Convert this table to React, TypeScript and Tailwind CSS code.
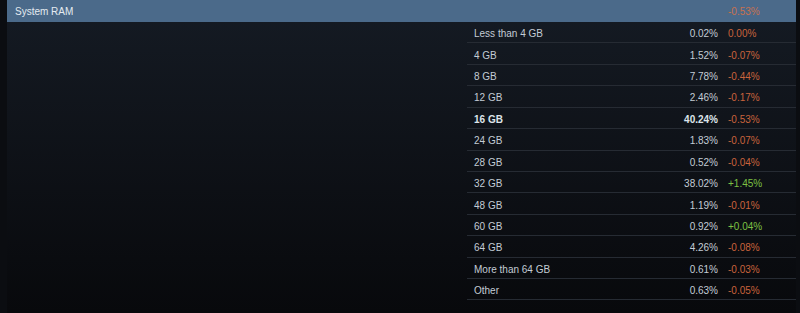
import React from 'react';

type Row = { label: string; pct: string; change: string; bold?: boolean };

const ROWS: Row[] = [
  { label: 'Less than 4 GB', pct: '0.02%', change: '0.00%' },
  { label: '4 GB', pct: '1.52%', change: '-0.07%' },
  { label: '8 GB', pct: '7.78%', change: '-0.44%' },
  { label: '12 GB', pct: '2.46%', change: '-0.17%' },
  { label: '16 GB', pct: '40.24%', change: '-0.53%', bold: true },
  { label: '24 GB', pct: '1.83%', change: '-0.07%' },
  { label: '28 GB', pct: '0.52%', change: '-0.04%' },
  { label: '32 GB', pct: '38.02%', change: '+1.45%' },
  { label: '48 GB', pct: '1.19%', change: '-0.01%' },
  { label: '60 GB', pct: '0.92%', change: '+0.04%' },
  { label: '64 GB', pct: '4.26%', change: '-0.08%' },
  { label: 'More than 64 GB', pct: '0.61%', change: '-0.03%' },
  { label: 'Other', pct: '0.63%', change: '-0.05%' },
];

function changeColor(change: string) {
  return change.startsWith('+') ? 'text-[#7cc043]' : 'text-[#c9633c]';
}

export default function App() {
  return (
    <div className="w-[800px] h-[313px] bg-[#0b0d11] flex pl-[7px] pr-[4px] font-['Liberation_Sans',Arial,sans-serif] text-[10px] overflow-hidden">
      <div className="flex-1 flex flex-col bg-gradient-to-b from-[#151b24] to-[#08090c]">
        {/* header bar */}
        <div className="h-[22px] shrink-0 bg-[#4b6a8a] flex items-center pt-[1px]">
          <span className="flex-1 pl-[8px] text-[#e4eaf0]">System RAM</span>
          <span className="w-[68px] text-[#c8714f]">-0.53%</span>
        </div>

        <div className="flex-1 flex">
          <div className="flex-1" />
          {/* breakdown table */}
          <div className="w-[329px] flex flex-col">
            {ROWS.map((row) => (
              <div
                key={row.label}
                className={`h-[21.43px] shrink-0 flex items-center pt-[3px] border-b border-[#262b33] ${row.bold ? 'font-bold text-[#dde4ea]' : 'text-[#c3ccd5]'}`}
              >
                <span className="flex-1 pl-[7px]">{row.label}</span>
                <span className="pr-[10px] text-right">{row.pct}</span>
                <span className={`w-[68px] font-normal ${changeColor(row.change)}`}>{row.change}</span>
              </div>
            ))}
          </div>
        </div>
      </div>
    </div>
  );
}
